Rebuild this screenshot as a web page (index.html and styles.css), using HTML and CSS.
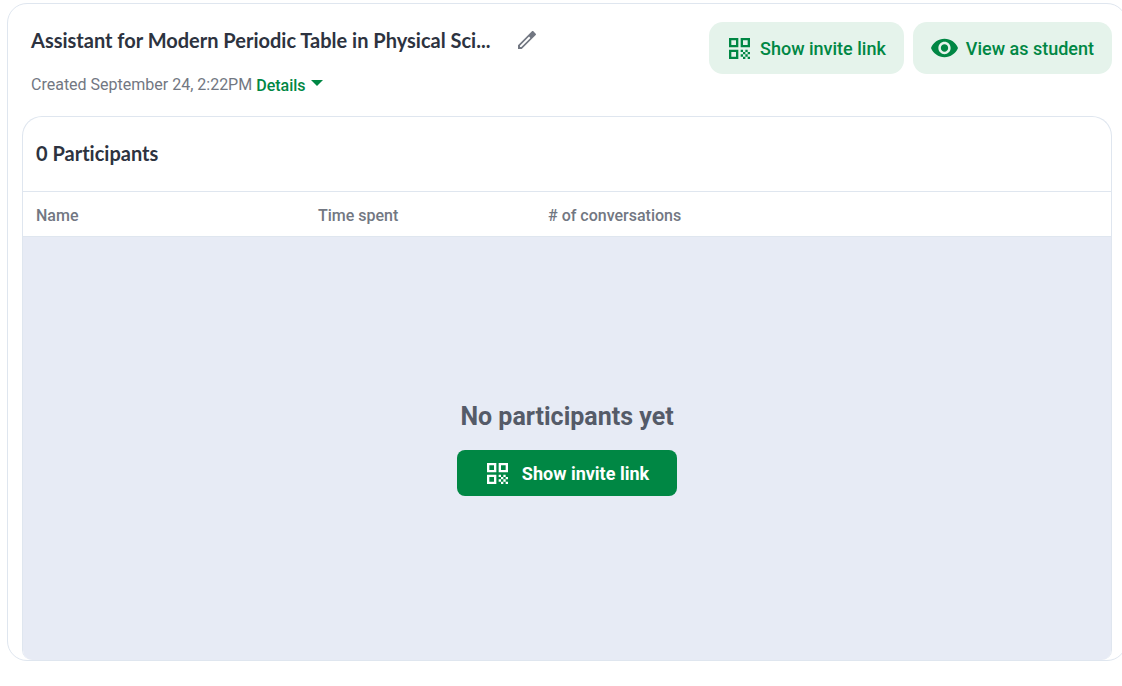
FILE: index.html
```html
<!DOCTYPE html>
<html lang="en">
<head>
    <meta charset="UTF-8">
    <meta name="viewport" content="width=device-width, initial-scale=1">
    <title>Participants</title>
    <link rel="stylesheet" href="styles.css">
</head>
<body>
    <!-- shared icon -->
    <svg class="sprite" aria-hidden="true">
        <symbol id="icon-qr" viewBox="3 3 18 18">
            <path fill-rule="evenodd" d="M3 3h8v8H3zM5 5v4h4V5zM3 13h8v8H3zM5 15v4h4v-4zM13 3h8v8h-8zM15 5v4h4V5z"/>
            <path d="M13 13h2v2h-2zM17 13h2v2h-2zM15 15h2v2h-2zM19 15h2v2h-2zM13 17h2v2h-2zM17 17h2v2h-2zM15 19h2v2h-2zM19 19h2v2h-2z"/>
        </symbol>
    </svg>

    <main class="panel">
        <header class="header">
            <div class="header-info">
                <div class="title-row">
                    <h1>Assistant for Modern Periodic Table in Physical Sci...</h1>
                    <button class="btn-edit" type="button" aria-label="Edit">
                        <svg viewBox="3 3 18 18" width="18" height="18">
                            <path fill-rule="evenodd" d="M3 17.25V21h3.75L20.71 7.04c.39-.39.39-1.02 0-1.41l-2.34-2.34c-.39-.39-1.02-.39-1.41 0L3 17.25zM14.06 8.6l1.34 1.34L6.3 19H5v-1.3z"/>
                        </svg>
                    </button>
                </div>
                <div class="created">
                    <span>Created September 24, 2:22PM</span>
                    <button class="btn-details" type="button">Details <span class="caret"></span></button>
                </div>
            </div>
            <div class="actions">
                <button class="btn btn-light" type="button">
                    <svg class="icon-qr"><use href="#icon-qr"/></svg>
                    Show invite link
                </button>
                <button class="btn btn-light" type="button">
                    <svg class="icon-eye" viewBox="1 4 22 16">
                        <path d="M12 4.5C7 4.5 2.73 7.61 1 12c1.73 4.39 6 7.5 11 7.5s9.27-3.11 11-7.5c-1.73-4.39-6-7.5-11-7.5zM12 17c-2.76 0-5-2.24-5-5s2.24-5 5-5 5 2.24 5 5-2.24 5-5 5zm0-8c-1.66 0-3 1.34-3 3s1.34 3 3 3 3-1.34 3-3-1.34-3-3-3z"/>
                    </svg>
                    View as student
                </button>
            </div>
        </header>

        <section class="participants">
            <h2>0 Participants</h2>
            <table class="participants-table">
                <thead>
                    <tr>
                        <th class="col-name">Name</th>
                        <th class="col-time">Time spent</th>
                        <th># of conversations</th>
                    </tr>
                </thead>
            </table>
            <div class="empty">
                <h3>No participants yet</h3>
                <button class="btn btn-primary" type="button">
                    <svg class="icon-qr"><use href="#icon-qr"/></svg>
                    Show invite link
                </button>
            </div>
        </section>
    </main>
</body>
</html>
```
FILE: styles.css
```css
* {
    box-sizing: border-box;
}
body {
    margin: 0;
    padding: 3px 0 24px 7px;
    background-color: #fff;
    color: #2d3340;
    font-family: Roboto, "Liberation Sans", sans-serif;
    overflow-x: hidden;
}
h1, h2, h3 {
    margin: 0;
}
button {
    font-family: inherit;
    border: none;
    background: none;
    padding: 0;
    cursor: pointer;
}
svg {
    fill: currentColor;
    flex-shrink: 0;
}
.sprite {
    display: none;
}
.panel {
    min-height: calc(100vh - 28px);
    margin-right: -5px;
    padding: 18px 14px 0;
    border: 1px solid #dfe6ef;
    border-radius: 20px;
    display: flex;
    flex-direction: column;
}
.header {
    display: flex;
    justify-content: space-between;
    align-items: flex-start;
    padding-left: 9px;
    margin-bottom: 18px;
}
.title-row {
    display: flex;
    align-items: center;
    gap: 28px;
    height: 36px;
}
h1, h2 {
    font-family: Lato, sans-serif;
    font-size: 20px;
    font-weight: 700;
    line-height: 24px;
    font-variant-ligatures: none;
}
.btn-edit {
    display: flex;
    color: #727782;
}
.created {
    display: flex;
    gap: 4px;
    margin-top: 14px;
    font-size: 16px;
    line-height: 26px;
    color: #727782;
}
.btn-details {
    display: flex;
    align-items: center;
    gap: 5px;
    font-size: 16px;
    font-weight: 500;
    color: #008744;
}
.caret {
    border: 6px solid transparent;
    border-top-color: currentColor;
    border-bottom: none;
    margin-bottom: 4px;
}
.actions {
    display: flex;
    gap: 9px;
}
.btn {
    display: flex;
    align-items: center;
    font-size: 18px;
    font-weight: 500;
}
.btn-light {
    height: 52px;
    padding: 0 18px;
    gap: 8px;
    border-radius: 14px;
    background-color: #e5f3eb;
    color: #008744;
}
.icon-qr {
    width: 21px;
    height: 21px;
    margin: 0 2px;
}
.icon-eye {
    width: 27px;
    height: 20px;
}
.participants {
    flex: 1;
    display: flex;
    flex-direction: column;
    border: 1px solid #dfe6ef;
    border-bottom: none;
    border-radius: 20px 20px 10px 10px;
    overflow: hidden;
}
h2 {
    padding: 24px 13px 26px;
}
.participants-table {
    width: 100%;
    table-layout: fixed;
    border-collapse: collapse;
    border-top: 1px solid #dfe6ef;
    border-bottom: 1px solid #dfe6ef;
}
.participants-table th {
    height: 45px;
    padding: 2px 13px 0;
    text-align: left;
    font-size: 16px;
    font-weight: 500;
    color: #727782;
}
.col-name {
    width: 282px;
}
.col-time {
    width: 230px;
}
.empty {
    flex: 1;
    display: flex;
    flex-direction: column;
    align-items: center;
    justify-content: center;
    gap: 17px;
    background-color: #e7ebf5;
}
.empty h3 {
    font-size: 25px;
    line-height: 32px;
    color: #555b68;
}
.btn-primary {
    height: 46px;
    padding: 0 28px;
    gap: 12px;
    border-radius: 8px;
    background-color: #008744;
    color: #fff;
    font-weight: 700;
}
```
